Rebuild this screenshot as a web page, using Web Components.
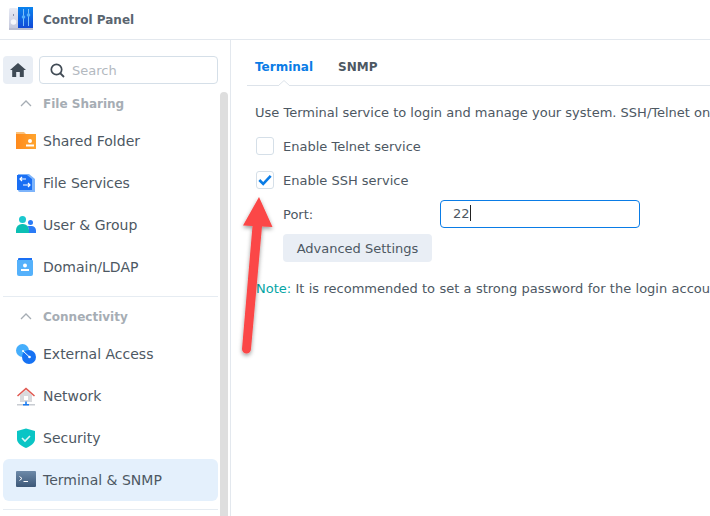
<!DOCTYPE html>
<html>
<head>
<meta charset="utf-8">
<title>Control Panel</title>
<style>
  html, body { margin: 0; height: 100%; overflow: hidden; background: #fff; }
  body { font: 13px "DejaVu Sans", Verdana, sans-serif; color: #414b55; }
</style>
</head>
<body>
<cp-app>
  <cp-titlebar slot="title">Control Panel</cp-titlebar>
  <cp-sidebar slot="side">
    <cp-group label="File Sharing">
      <cp-item icon="folder">Shared Folder</cp-item>
      <cp-item icon="files">File Services</cp-item>
      <cp-item icon="users">User &amp; Group</cp-item>
      <cp-item icon="domain">Domain/LDAP</cp-item>
    </cp-group>
    <cp-group label="Connectivity">
      <cp-item icon="external">External Access</cp-item>
      <cp-item icon="network">Network</cp-item>
      <cp-item icon="security">Security</cp-item>
      <cp-item icon="terminal" active>Terminal &amp; SNMP</cp-item>
    </cp-group>
  </cp-sidebar>
  <cp-terminal-page slot="main"></cp-terminal-page>
</cp-app>
<cp-arrow></cp-arrow>

<script>
// svg for the sidebar icons, all on a 20x20 box
const ICONS = {
  folder: `<defs><linearGradient id="g" x1="0" y1="0" x2="1" y2="0"><stop offset="0" stop-color="#ff8a1c"/><stop offset="1" stop-color="#ffa42e"/></linearGradient></defs>
    <path d="M0 3V1h8l2 2z" fill="#fbc27c"/><rect y="3" width="20" height="15" fill="url(#g)"/>
    <circle cx="14" cy="10" r="2" fill="#fff"/><rect x="10" y="13.500" width="8" height="2" fill="#fff"/>`,
  files: `<path d="M2 1h11l6 5v13H4a2 2 0 0 1-2-2z" fill="#7db4fb"/><path d="M1 2h10l5 4v11H1z" fill="#1a6ff4"/>
    <path d="M10 5.500H4M6 3.500 4 5.500l2 2M7 11.500h7M12 9.500l2 2-2 2" transform="translate(0 .5)" fill="none" stroke="#fff" stroke-width="1.200"/>`,
  users: `<circle cx="6.500" cy="4.500" r="3.500" fill="#1cc8cf"/><path d="M0 18v-3a6 6 0 0 1 6-6h1a6 6 0 0 1 6 6v3z" fill="#0cbfb4"/>
    <circle cx="14.500" cy="7.500" r="2.500" fill="#2a7bf6"/><path d="M13 18v-3c0-2-1-3-1.500-3.500.7-.4 1.500-.5 2.500-.5h1.500a4.500 4.500 0 0 1 4.500 4.500V18z" fill="#2a7bf6"/>`,
  domain: `<path d="M2 2a1 1 0 0 1 1-1h13v2H2z" fill="#1a6ff4"/><path d="M1 3h15a1 1 0 0 1 1 1v13a2 2 0 0 1-2 2H3a2 2 0 0 1-2-2z" fill="#55b1fb"/>
    <circle cx="9" cy="8.500" r="2" fill="#fff"/><rect x="5" y="12" width="8" height="2" fill="#fff"/>`,
  external: `<circle cx="6.500" cy="6.500" r="6.500" fill="#45aefc"/><circle cx="13" cy="13" r="7" fill="#1672f3"/>
    <path d="M7 7l6.500 6" stroke="#fff" stroke-width="1"/><circle cx="13.500" cy="13" r="1.300" fill="#fff"/><circle cx="7" cy="7" r="1" fill="#fff"/>`,
  network: `<path d="M4 9v7h12V9L10 4z" fill="#d9dadd"/><path d="M1 9.500 10 1.500l9 8-1 1-8-7-8 7z" fill="#e0574f"/>
    <rect x="8" y="10" width="4" height="4" fill="#fff"/><rect x="1" y="18" width="18" height="1.500" fill="#c8ccd2"/>
    <rect x="7" y="18" width="6" height="1.500" fill="#1a7bf0"/><rect x="9.200" y="15.500" width="1.600" height="3" fill="#1a7bf0"/>`,
  security: `<path d="M10 .5 19 3v8c0 4-4 7-9 9-5-2-9-5-9-9V3z" fill="#0ac5c5"/><path d="M6 10l3 3 5-5" fill="none" stroke="#dff8f7" stroke-width="1.600"/>`,
  terminal: `<defs><linearGradient id="t" x1="0" y1="0" x2="0" y2="1"><stop offset="0" stop-color="#6d8aa9"/><stop offset="1" stop-color="#3d5878"/></linearGradient></defs>
    <rect y="1" width="20" height="16" rx="1" fill="url(#t)"/><path d="M3.500 6.500l2.500 2-2.500 2" fill="none" stroke="#fff" stroke-width="1"/><rect x="7.500" y="11" width="4.500" height="1" fill="#fff"/>`
};

// outer frame: title bar on top, then sidebar and content
class CpApp extends HTMLElement {
  constructor() {
    super();
    this.attachShadow({ mode: 'open' }).innerHTML = `
      <style>
        :host { display: grid; grid-template-columns: 230px 1fr; grid-template-rows: 40px 1fr; width: 710px; height: 516px; overflow: hidden; }
        .t { grid-column: 1 / 3; display: block; }
        .m { min-width: 0; overflow: hidden; border-left: 1px solid #e3e8ee; }
      </style>
      <div class="t"><slot name="title"></slot></div>
      <div><slot name="side"></slot></div>
      <div class="m"><slot name="main"></slot></div>`;
  }
}

class CpTitlebar extends HTMLElement {
  constructor() {
    super();
    this.attachShadow({ mode: 'open' }).innerHTML = `
      <style>
        :host { display: flex; align-items: center; gap: 9px; height: 39px; padding-left: 9px; border-bottom: 1px solid #e3e8ee; font-weight: bold; font-size: 12px; color: #5a6570; }
        svg { display: block; margin-top: -1px; }
      </style>
      <svg width="25" height="24" viewBox="0 0 25 24">
        <defs>
          <linearGradient id="a" x1="0" y1="0" x2="0" y2="1"><stop offset="0" stop-color="#e8ebf5"/><stop offset="1" stop-color="#c3c7dc"/></linearGradient>
          <linearGradient id="b" x1="0" y1="0" x2="0" y2="1"><stop offset="0" stop-color="#0a83ee"/><stop offset="1" stop-color="#1149d6"/></linearGradient>
        </defs>
        <rect x="0" y="1" width="9" height="21" rx="1.500" fill="url(#a)"/>
        <rect x="9" y="0" width="15" height="21" fill="url(#b)"/>
        <rect x="0" y="21" width="24" height="2" fill="#b9bdd0"/>
        <circle cx="4.500" cy="15" r="2.800" fill="#f6f7fb"/><rect x="4" y="7" width="1" height="2" fill="#8a90a8"/>
        <path d="M14.500 2v17M19.500 2v17" stroke="#7fc0f8" stroke-width="1"/>
        <circle cx="14.500" cy="10" r="1.800" fill="#56b2fa"/><circle cx="19.500" cy="8" r="1.800" fill="#56b2fa"/>
      </svg>
      <span><slot></slot></span>`;
  }
}

class CpSidebar extends HTMLElement {
  constructor() {
    super();
    this.attachShadow({ mode: 'open' }).innerHTML = `
      <style>
        :host { display: block; height: 476px; position: relative; overflow: hidden; padding: 16px 12px 0 3px; box-sizing: border-box; }
        .top { display: flex; gap: 6px; height: 28px; margin-bottom: 9px; }
        .home { width: 30px; border-radius: 4px; background: #e9eef5; display: flex; align-items: center; justify-content: center; }
        .search { flex: 1; display: flex; align-items: center; gap: 7px; padding-left: 10px; border: 1px solid #d5dfe8; border-radius: 4px; color: #b3b9bf; font-size: 13px; box-sizing: border-box; }
        .bar { position: absolute; left: 220px; top: 52px; bottom: 0; width: 8px; border-radius: 4px 4px 0 0; background: #dedede; }
      </style>
      <div class="top">
        <div class="home">
          <svg width="16" height="14" viewBox="0 0 16 14"><path d="M8 0 0 7h2.200v7h4V9h3.600v5h4V7H16z" fill="#3f4a55"/></svg>
        </div>
        <div class="search">
          <svg width="15" height="15" viewBox="0 0 15 15"><circle cx="6.500" cy="6.500" r="5.200" fill="none" stroke="#414b55" stroke-width="1.700"/><path d="M10 10l4 4" stroke="#414b55" stroke-width="1.800"/></svg>
          <span>Search</span>
        </div>
      </div>
      <slot></slot>
      <div class="bar"></div>`;
  }
}

class CpGroup extends HTMLElement {
  constructor() {
    super();
    this.attachShadow({ mode: 'open' }).innerHTML = `
      <style>
        :host { display: block; border-bottom: 1px solid #e6ecf2; width: 215px; padding-bottom: 8px; margin-bottom: 9px; }
        .head { display: flex; align-items: center; height: 20px; padding-left: 17px; gap: 11px; color: #a6adb4; font-weight: bold; font-size: 12px; }
        .head span { padding-top: 2px; }
        .items { padding-top: 7px; }
      </style>
      <div class="head">
        <svg width="12" height="7" viewBox="0 0 12 7"><path d="M1 6l5-5 5 5" fill="none" stroke="#a6adb4" stroke-width="1.300"/></svg>
        <span id="l"></span>
      </div>
      <div class="items"><slot></slot></div>`;
    this.shadowRoot.getElementById('l').textContent = this.getAttribute('label');
  }
}

class CpItem extends HTMLElement {
  constructor() {
    super();
    this.attachShadow({ mode: 'open' }).innerHTML = `
      <style>
        :host { display: flex; align-items: center; gap: 7px; height: 42px; padding-left: 13px; border-radius: 6px; font-size: 14px; color: #4d5863; }
        :host([active]) { background: #e4f0fc; }
        svg { flex: none; display: block; }
      </style>
      <svg width="20" height="20" viewBox="0 0 20 20">${ICONS[this.getAttribute('icon')]}</svg>
      <span><slot></slot></span>`;
  }
}

// Terminal tab with the service form
class CpTerminalPage extends HTMLElement {
  constructor() {
    super();
    this.attachShadow({ mode: 'open' }).innerHTML = `
      <style>
        :host { display: block; width: 479px; padding: 13px 0 0 16px; box-sizing: border-box; font-size: 13px; color: #4d5863; white-space: nowrap; }
        .tabs { display: flex; gap: 25px; height: 24px; padding: 2px 0 6px 8px; align-items: center; border-bottom: 1px solid #dde3ea; position: relative; font-weight: bold; font-size: 12px; margin-bottom: 17px; }
        .tabs b:first-child { color: #0a7ce6; }
        .notch { position: absolute; left: 31px; bottom: -1px; width: 12px; height: 6px; }
        .body { padding-left: 8px; }
        .intro { height: 20px; line-height: 20px; margin-bottom: 6px; }
        .port { display: flex; align-items: center; height: 28px; margin: 3px 0 6px 28px; }
        .port label { width: 157px; }
        .field { width: 200px; height: 28px; box-sizing: border-box; border: 1px solid #0a7ce6; border-radius: 4px; padding-left: 12px; line-height: 26px; }
        .caret { display: inline-block; width: 1px; height: 16px; background: #222; vertical-align: -3px; }
        .btn { display: block; width: 149px; height: 28px; margin-left: 28px; line-height: 30px; text-align: center; background: #e9eef5; border-radius: 4px; }
        .note { height: 20px; line-height: 20px; margin: 17px 0 0 1px; word-spacing: .2px; }
        .note b { font-weight: normal; color: #05a5a5; }
      </style>
      <div class="tabs"><b>Terminal</b><b>SNMP</b>
        <svg class="notch" viewBox="0 0 12 6"><path d="M0 6 6 .5 12 6" fill="#fff" stroke="#dde3ea"/></svg>
      </div>
      <div class="body">
        <div class="intro">Use Terminal service to login and manage your system. SSH/Telnet on</div>
        <cp-check>Enable Telnet service</cp-check>
        <cp-check checked>Enable SSH service</cp-check>
        <div class="port"><label>Port:</label><div class="field">22<span class="caret"></span></div></div>
        <div class="btn">Advanced Settings</div>
        <div class="note"><b>Note:</b> It is recommended to set a strong password for the login accou</div>
      </div>`;
  }
}

class CpCheck extends HTMLElement {
  constructor() {
    super();
    const mark = this.hasAttribute('checked')
      ? '<svg width="14" height="12" viewBox="0 0 14 12"><path d="M1.300 6l3.900 3.900L12.700 1.800" fill="none" stroke="#0a7ce6" stroke-width="2.600"/></svg>' : '';
    this.attachShadow({ mode: 'open' }).innerHTML = `
      <style>
        :host { display: flex; align-items: center; gap: 9px; height: 34px; padding-left: 1px; }
        .box { width: 18px; height: 18px; box-sizing: border-box; border: 1px solid #d5dfe8; border-radius: 3px; display: flex; align-items: center; justify-content: center; }
      </style>
      <div class="box">${mark}</div><span><slot></slot></span>`;
  }
}

// red annotation arrow painted over the screenshot
class CpArrow extends HTMLElement {
  constructor() {
    super();
    this.attachShadow({ mode: 'open' }).innerHTML = `
      <style>
        :host { position: absolute; left: 235px; top: 190px; width: 50px; height: 175px; pointer-events: none; }
        svg { display: block; overflow: visible; }
      </style>
      <svg width="50" height="175" viewBox="0 0 50 175">
        <defs><filter id="s" x="-50%" y="-20%" width="200%" height="140%"><feDropShadow dx="0" dy="2" stdDeviation="2" flood-color="#000" flood-opacity=".4"/></filter></defs>
        <path filter="url(#s)" d="M24 7 8 35.500 17.500 36 7 159a4.500 4.500 0 0 0 9 0L27 36.500 37.500 37z" fill="#fb4646"/>
      </svg>`;
  }
}

customElements.define('cp-check', CpCheck);
customElements.define('cp-item', CpItem);
customElements.define('cp-group', CpGroup);
customElements.define('cp-sidebar', CpSidebar);
customElements.define('cp-titlebar', CpTitlebar);
customElements.define('cp-terminal-page', CpTerminalPage);
customElements.define('cp-arrow', CpArrow);
customElements.define('cp-app', CpApp);
</script>
</body>
</html>
